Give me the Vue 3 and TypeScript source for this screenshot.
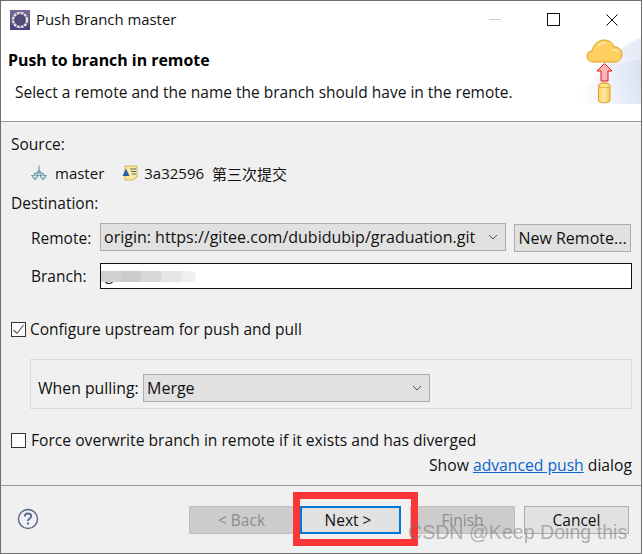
<script setup lang="ts">
const title = 'Push Branch master'
const remote = 'origin: https://gitee.com/dubidubip/graduation.git'
</script>

<template>
  <div class="window">
    <div class="titlebar">
      <svg class="app-icon" width="20" height="20" viewBox="0 0 20 20">
        <defs>
          <linearGradient id="appbg" x1="0" y1="0" x2="0" y2="1">
            <stop offset="0" stop-color="#7a6a9c" />
            <stop offset="1" stop-color="#4a3a78" />
          </linearGradient>
        </defs>
        <rect width="20" height="20" fill="url(#appbg)" />
        <circle cx="10" cy="10" r="7" fill="#3f3a58" stroke="#dcdae0" stroke-width="2.6" stroke-dasharray="3 0.7" />
        <circle cx="10" cy="10" r="5" fill="#534e78" />
      </svg>
      <span class="title-text">{{ title }}</span>
      <div class="win-btns">
        <span class="min"></span>
        <span class="max"></span>
        <svg width="12" height="12" viewBox="0 0 12 12">
          <path d="M0.5 0.5L11.5 11.5M11.5 0.5L0.5 11.5" stroke="#111" stroke-width="1" />
        </svg>
      </div>
    </div>

    <div class="banner">
      <div class="banner-text">
        <h1>Push to branch in remote</h1>
        <p>Select a remote and the name the branch should have in the remote.</p>
      </div>
      <svg class="banner-art" width="71" height="66" viewBox="0 0 71 66">
        <defs>
          <linearGradient id="sky" x1="0" y1="0.6" x2="1" y2="0.4">
            <stop offset="0" stop-color="#fff" />
            <stop offset="1" stop-color="#e6ebf7" />
          </linearGradient>
          <linearGradient id="sky2" x1="0" y1="0.6" x2="1" y2="0.4">
            <stop offset="0" stop-color="#fff" />
            <stop offset="1" stop-color="#dbe3f3" />
          </linearGradient>
          <linearGradient id="cyl" x1="0" y1="0" x2="1" y2="0">
            <stop offset="0" stop-color="#fbd25e" />
            <stop offset="0.5" stop-color="#ffe9a6" />
            <stop offset="1" stop-color="#f7c64c" />
          </linearGradient>
        </defs>
        <path d="M0 66C22 50 42 8 71 0V66Z" fill="url(#sky)" />
        <path d="M8 66C22 40 46 24 71 21V66Z" fill="url(#sky2)" />
        <path d="M23 24C19 24 17 21 17 18C17 15 19 13 22 13C23 6 29 2 34 2C39 2 43 5 44 9C48 8 52 12 52 16C52 21 48 24 45 24Z" fill="#ffcf60" stroke="#e09f1c" stroke-width="1" />
        <path d="M28 8C30 5.500 33 4.500 36 5M43 12C45 11.500 47 12 48 14" stroke="#ffe9b0" stroke-width="1.600" fill="none" />
        <path d="M34.500 25.500L42 33H38V43H31V33H27Z" fill="#f9b5b5" stroke="#e8141e" stroke-width="1" />
        <path d="M28.500 47.500C28.500 44 40 44 40 47.500V62.500C40 65.500 28.500 65.500 28.500 62.500Z" fill="url(#cyl)" stroke="#d9a22a" stroke-width="1" />
        <ellipse cx="34.250" cy="47.500" rx="5.750" ry="2" fill="#ffe79b" stroke="#d9a22a" stroke-width="0.800" />
      </svg>
    </div>

    <div class="body">
      <div class="label">Source:</div>
      <div class="source-row">
        <svg width="16" height="16" viewBox="0 0 16 16" fill="#d6e6ea" stroke="#6f9aa8" stroke-width="1.100">
          <path d="M8 0.500V6" fill="none" />
          <path d="M8 5.500L5 8.500H3.500V10.500H0.800L4 14.500L7.200 10.500H5.500L8 7.500L10.500 10.500H8.800L12 14.500L15.200 10.500H12.500V8.500H11Z" />
        </svg>
        <span class="branch-name">master</span>
        <svg width="16" height="16" viewBox="0 0 16 16">
          <path d="M3 1H15V12L11 15H3Z" fill="#fbe9a0" stroke="#c9a53c" stroke-width="0.800" />
          <path d="M8 4H14M9 6.500H14M10 9H14" stroke="#55608a" stroke-width="1" />
          <path d="M0.500 11L4 3.500L7.500 11Z" fill="#2f5ea8" />
        </svg>
        <span class="commit">3a32596</span>
        <span class="message">第三次提交</span>
      </div>
      <div class="label dest">Destination:</div>

      <div class="remote-row">
        <span class="field-label">Remote:</span>
        <div class="combo remote-combo">
          <span>{{ remote }}</span>
          <svg width="10" height="6" viewBox="0 0 10 6"><path d="M1 1L5 5L9 1" fill="none" stroke="#555" /></svg>
        </div>
        <div class="btn new-remote">New Remote...</div>
      </div>

      <div class="branch-row">
        <span class="field-label">Branch:</span>
        <div class="input">
          <span class="typed">g</span>
          <span class="smudge"></span>
        </div>
      </div>

      <div class="check-row upstream">
        <span class="check">
          <svg width="15" height="15" viewBox="0 0 15 15"><path d="M2.500 8L6 11.500L12.500 3" fill="none" stroke="#555" stroke-width="1.100" /></svg>
        </span>
        <span>Configure upstream for push and pull</span>
      </div>

      <div class="group">
        <span class="field-label pull-label">When pulling:</span>
        <div class="combo pull-combo">
          <span>Merge</span>
          <svg width="10" height="6" viewBox="0 0 10 6"><path d="M1 1L5 5L9 1" fill="none" stroke="#555" /></svg>
        </div>
      </div>

      <div class="check-row force">
        <span class="check"></span>
        <span>Force overwrite branch in remote if it exists and has diverged</span>
      </div>

      <div class="advanced">Show <a href="#">advanced push</a> dialog</div>
    </div>

    <div class="footer">
      <svg class="help" width="22" height="22" viewBox="0 0 22 22">
        <circle cx="11" cy="11" r="9.500" fill="none" stroke="#56688c" stroke-width="1.400" />
        <path d="M7.800 8.500C7.800 6.500 9.300 5.500 11 5.500C12.800 5.500 14.200 6.600 14.200 8.300C14.200 10.500 11 10.500 11 13" fill="none" stroke="#56688c" stroke-width="1.800" />
        <rect x="10" y="14.500" width="2" height="2" fill="#56688c" />
      </svg>
      <div class="actions">
        <div class="btn wizard disabled">&lt; Back</div>
        <div class="btn wizard primary">Next &gt;</div>
        <div class="btn wizard disabled finish">Finish</div>
        <div class="btn wizard cancel">Cancel</div>
      </div>
    </div>

    <div class="highlight"></div>
    <div class="watermark">CSDN @Keep Doing this</div>
  </div>
</template>

<style>
html, body {
  margin: 0;
  background: #fff;
}
</style>

<style scoped>
.window {
  width: 642px;
  height: 554px;
  box-sizing: border-box;
  position: relative;
  overflow: hidden;
  background: #f0f0f0;
  border: 1px solid #6e6e6e;
  font-family: "Open Sans", "Noto Sans CJK SC", sans-serif;
  font-size: 15.500px;
  color: #111;
}
.titlebar {
  height: 37px;
  background: #fff;
  display: flex;
  align-items: center;
  padding-left: 9px;
}
.app-icon {
  margin-right: 6px;
}
.title-text {
  font-size: 14.900px;
  margin-top: -1px;
}
.win-btns {
  margin-left: auto;
  display: flex;
  align-items: center;
}
.min {
  width: 12px;
  height: 1px;
  background: #ccc;
  margin-right: 46px;
}
.max {
  width: 11px;
  height: 11px;
  border: 1px solid #111;
  margin-right: 46px;
}
.win-btns svg {
  margin-right: 23px;
}
.banner {
  height: 83px;
  background: #fff;
  border-bottom: 1px solid #9a9a9a;
  display: flex;
  justify-content: space-between;
  overflow: hidden;
}
.banner h1 {
  margin: 8px 0 0 7px;
  font-size: 15.900px;
  line-height: 28px;
  font-weight: 700;
  color: #000;
}
.banner p {
  margin: 6px 0 0 14px;
  line-height: 24px;
}
.banner-art {
  flex: none;
}
.body {
  height: 363px;
  padding: 10px 9px 0 10px;
  box-sizing: border-box;
}
.label {
  line-height: 24px;
}
.source-row {
  display: flex;
  align-items: center;
  height: 24px;
  margin-top: 5px;
  padding-left: 20px;
  font-size: 15px;
}
.branch-name {
  margin: 0 18px 0 8px;
}
.commit {
  margin-left: 6px;
}
.message {
  margin-left: 8px;
}
.dest {
  margin-top: 6px;
}
.remote-row,
.branch-row {
  display: flex;
  padding-left: 20px;
}
.remote-row {
  margin-top: 8px;
  height: 29px;
  align-items: flex-start;
}
.remote-row .field-label {
  line-height: 30px;
}
.field-label {
  width: 69px;
  flex: none;
}
.combo {
  box-sizing: border-box;
  display: flex;
  align-items: center;
  justify-content: space-between;
  background: #e1e1e1;
  border: 1px solid #adadad;
  padding: 0 7px 0 3px;
}
.remote-combo {
  width: 406px;
  height: 28px;
  font-size: 16px;
}
.btn {
  box-sizing: border-box;
  display: flex;
  align-items: center;
  justify-content: center;
  background: #e1e1e1;
  border: 1px solid #adadad;
}
.new-remote {
  width: 117px;
  height: 28px;
  margin: 1px 0 0 8px;
  font-size: 16px;
}
.branch-row {
  margin-top: 11px;
  height: 26px;
  align-items: center;
}
.input {
  position: relative;
  flex: none;
  box-sizing: border-box;
  width: 532px;
  height: 26px;
  background: #fff;
  border: 1px solid #111;
  overflow: hidden;
}
.typed {
  position: absolute;
  left: 4px;
  top: -1px;
  color: #222;
}
.smudge {
  position: absolute;
  left: 0;
  top: 7px;
  width: 95px;
  height: 11px;
  background: linear-gradient(90deg, #d0d0d0 0 21%, #cbcbcb 21% 42%, #d8d8d8 42% 63%, #e6e6e6 63% 84%, #efefef 84%);
  border-radius: 0 6px 6px 0;
}
.check-row {
  display: flex;
  align-items: center;
  gap: 4px;
  height: 24px;
}
.upstream {
  margin-top: 28px;
}
.check {
  box-sizing: border-box;
  width: 15px;
  height: 15px;
  background: #fff;
  border: 1px solid #333;
  flex: none;
  display: flex;
}
.check svg {
  margin: -1px;
}
.group {
  box-sizing: border-box;
  display: flex;
  align-items: center;
  width: 602px;
  height: 50px;
  margin: 18px 0 0 19px;
  padding: 7px 0 0 7px;
  border: 1px solid #dcdcdc;
}
.pull-label {
  width: 105px;
  font-size: 15.800px;
}
.pull-combo {
  width: 287px;
  height: 28px;
  font-size: 16px;
}
.force {
  margin-top: 19px;
  gap: 5px;
  font-size: 15.650px;
}
.advanced {
  text-align: right;
  line-height: 20px;
  margin-top: 3px;
  font-size: 15.700px;
}
.advanced a {
  color: #0a66cc;
}
.footer {
  height: 68px;
  box-sizing: border-box;
  border-top: 1px solid #9a9a9a;
  display: flex;
  align-items: flex-start;
  padding: 20px 12px 0 16px;
}
.help {
  margin-top: 2px;
}
.actions {
  margin-left: auto;
  display: flex;
}
.wizard {
  width: 105px;
  height: 28px;
}
.disabled {
  background: #cccccc;
  color: #8c8c8c;
  border-color: #bfbfbf;
}
.primary {
  width: 101px;
  margin-left: 6px;
  padding-right: 5px;
  border: 2px solid #0078d7;
}
.finish,
.cancel {
  margin-left: 9px;
}
.highlight {
  position: absolute;
  left: 292px;
  top: 491px;
  width: 125px;
  height: 54px;
  box-sizing: border-box;
  border: 7px solid #fc3636;
}
.watermark {
  position: absolute;
  left: 407px;
  top: 519px;
  font-family: "Liberation Sans", sans-serif;
  font-size: 19.600px;
  line-height: 24px;
  color: rgba(120, 120, 120, 0.55);
  white-space: nowrap;
}
</style>
